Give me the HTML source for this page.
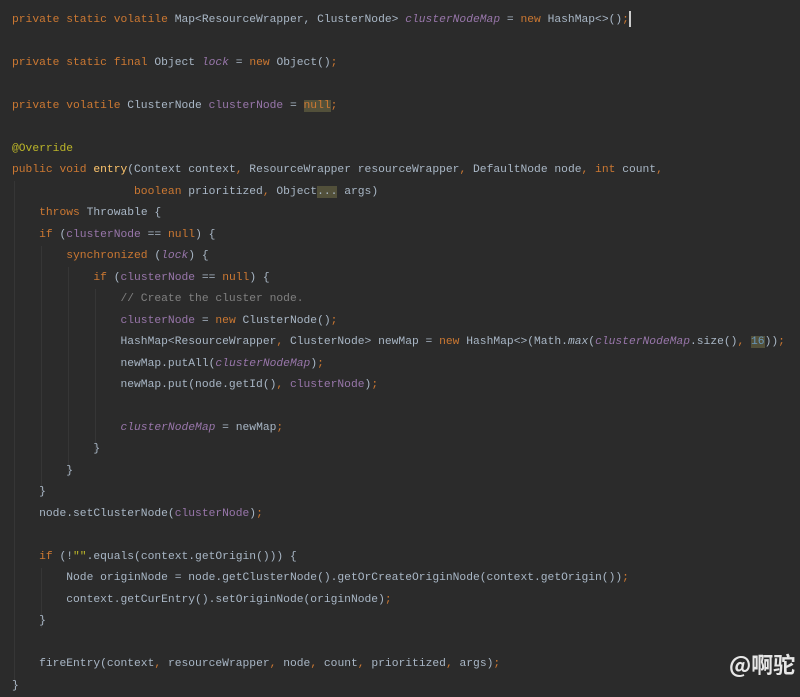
<!DOCTYPE html>
<html><head><meta charset="utf-8"><style>
html,body{margin:0;padding:0;background:#2b2b2b;width:800px;height:696px;overflow:hidden}
pre{position:absolute;left:12px;top:10px;margin:0;font-family:"Liberation Mono",monospace;font-size:11.3px;line-height:21.47px;color:#a9b7c6;white-space:pre}
.k{color:#cc7832}.f{color:#9876aa}.i{font-style:italic}.a{color:#bbb529}.n{color:#6897bb}.c{color:#808080}.m{color:#ffc66d}
.h{background:#52503a}
.g{position:absolute;width:1px;background:#363636}
.wm{position:absolute;left:729px;top:648px;font:bold 22px "Noto Sans CJK SC",sans-serif;color:#e6e6e6}
.cur{display:inline-block;width:2px;height:16px;background:#ccc;vertical-align:middle}
</style></head><body>
<div class="g" style="left:14px;top:181px;height:510px"></div>
<div class="g" style="left:41px;top:246px;height:250px"></div>
<div class="g" style="left:68px;top:267px;height:210px"></div>
<div class="g" style="left:95px;top:289px;height:165px"></div>
<div class="g" style="left:41px;top:568px;height:60px"></div>
<pre><span class="k">private static volatile </span>Map&lt;ResourceWrapper, ClusterNode&gt; <span class="f i">clusterNodeMap</span> = <span class="k">new </span>HashMap&lt;&gt;()<span class="k">;</span><span class="cur"></span>

<span class="k">private static final </span>Object <span class="f i">lock</span> = <span class="k">new </span>Object()<span class="k">;</span>

<span class="k">private volatile </span>ClusterNode <span class="f">clusterNode</span> = <span class="k h">null</span><span class="k">;</span>

<span class="a">@Override</span>
<span class="k">public void </span><span class="m">entry</span>(Context context<span class="k">, </span>ResourceWrapper resourceWrapper<span class="k">, </span>DefaultNode node<span class="k">, int </span>count<span class="k">,</span>
                  <span class="k">boolean </span>prioritized<span class="k">, </span>Object<span class="h">...</span> args)
    <span class="k">throws </span>Throwable {
    <span class="k">if </span>(<span class="f">clusterNode</span> == <span class="k">null</span>) {
        <span class="k">synchronized </span>(<span class="f i">lock</span>) {
            <span class="k">if </span>(<span class="f">clusterNode</span> == <span class="k">null</span>) {
                <span class="c">// Create the cluster node.</span>
                <span class="f">clusterNode</span> = <span class="k">new </span>ClusterNode()<span class="k">;</span>
                HashMap&lt;ResourceWrapper<span class="k">, </span>ClusterNode&gt; newMap = <span class="k">new </span>HashMap&lt;&gt;(Math.<span class="i">max</span>(<span class="f i">clusterNodeMap</span>.size()<span class="k">, </span><span class="n h">16</span>))<span class="k">;</span>
                newMap.putAll(<span class="f i">clusterNodeMap</span>)<span class="k">;</span>
                newMap.put(node.getId()<span class="k">, </span><span class="f">clusterNode</span>)<span class="k">;</span>

                <span class="f i">clusterNodeMap</span> = newMap<span class="k">;</span>
            }
        }
    }
    node.setClusterNode(<span class="f">clusterNode</span>)<span class="k">;</span>

    <span class="k">if </span>(!<span class="a">""</span>.equals(context.getOrigin())) {
        Node originNode = node.getClusterNode().getOrCreateOriginNode(context.getOrigin())<span class="k">;</span>
        context.getCurEntry().setOriginNode(originNode)<span class="k">;</span>
    }

    fireEntry(context<span class="k">, </span>resourceWrapper<span class="k">, </span>node<span class="k">, </span>count<span class="k">, </span>prioritized<span class="k">, </span>args)<span class="k">;</span>
}</pre>
<div class="wm">@啊驼</div>
</body></html>
